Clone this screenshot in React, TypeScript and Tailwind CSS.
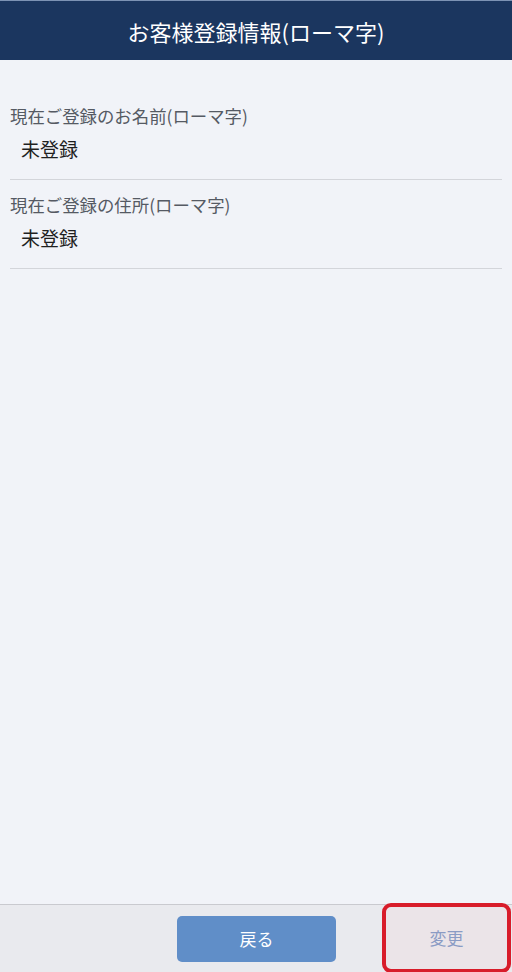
import React from 'react'

const font = { fontFamily: '"Noto Sans CJK JP", "Noto Sans", sans-serif' }

function InfoRow({ label, value }: { label: string; value: string }) {
  return (
    <div className="border-b border-[#d3d5da] pt-[13px] pb-[16px]">
      <div className="text-[17.4px] leading-6 text-[#555a63]">{label}</div>
      <div className="mt-[7px] pl-[11px] text-[19px] leading-7 text-[#1f1f1f]">{value}</div>
    </div>
  )
}

export default function App() {
  return (
    <div className="flex h-[972px] w-[512px] flex-col bg-[#f1f3f8]" style={font}>
      <header className="flex h-[60px] items-center justify-center border-t border-[#7d93b4] bg-[#1b365f]">
        <h1 className="text-[22px] leading-none text-white">お客様登録情報(ローマ字)</h1>
      </header>

      <main className="flex-1 px-[10px] pt-[31px]">
        <InfoRow label="現在ご登録のお名前(ローマ字)" value="未登録" />
        <InfoRow label="現在ご登録の住所(ローマ字)" value="未登録" />
      </main>

      <footer className="flex h-[68px] items-center border-t border-[#c9cacf] bg-[#e9eaee]">
        <div className="flex-1" />
        <button className="h-[46px] w-[159px] rounded-[5px] bg-[#608ec8] text-[17px] text-white">
          戻る
        </button>
        <div className="ml-[46px] mr-[1px] -mt-[2px] flex h-[70px] w-[129px] items-center justify-center rounded-[9px] border-4 border-[#d81c2a] bg-[#ebe4e8]">
          <span className="text-[17px] text-[#8a9bc4]">変更</span>
        </div>
      </footer>
    </div>
  )
}
